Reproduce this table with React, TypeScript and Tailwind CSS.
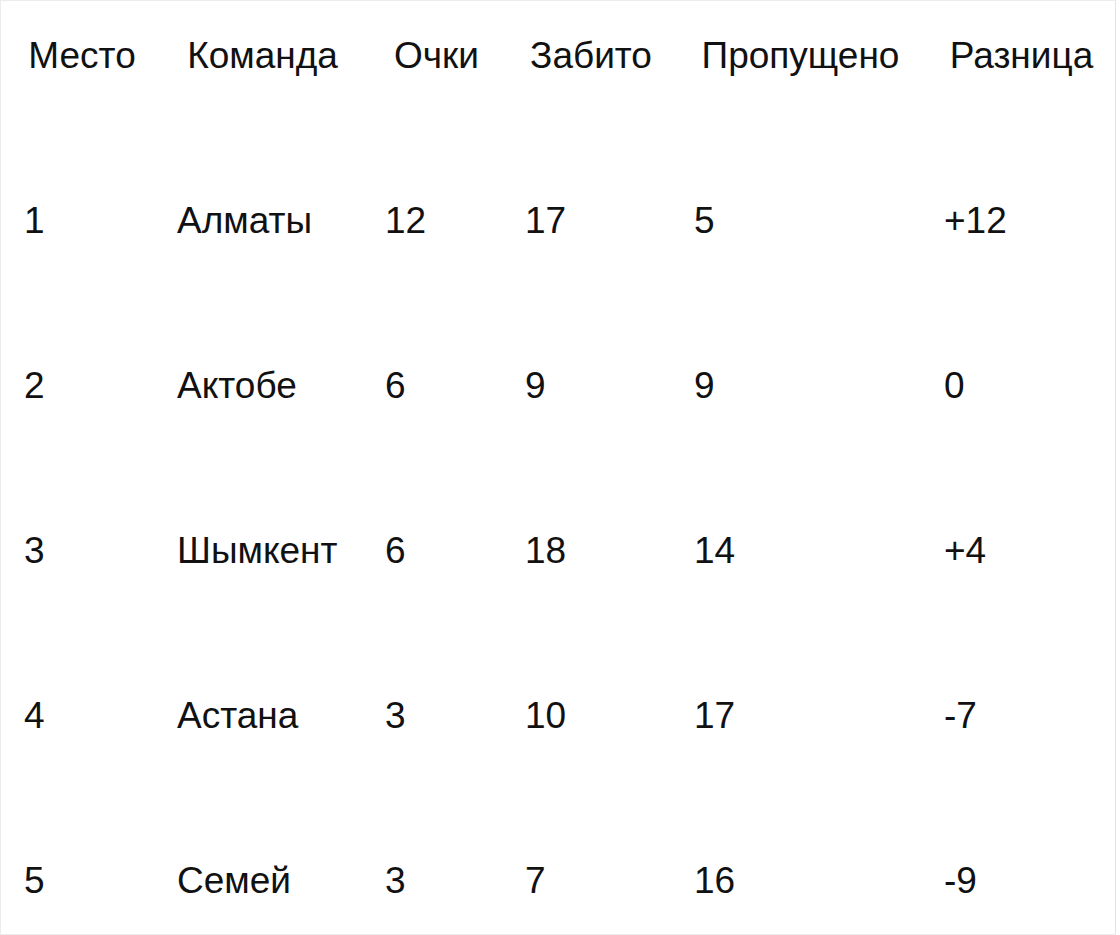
const columns = ['Место', 'Команда', 'Очки', 'Забито', 'Пропущено', 'Разница'];

const rows = [
  ['1', 'Алматы', '12', '17', '5', '+12'],
  ['2', 'Актобе', '6', '9', '9', '0'],
  ['3', 'Шымкент', '6', '18', '14', '+4'],
  ['4', 'Астана', '3', '10', '17', '-7'],
  ['5', 'Семей', '3', '7', '16', '-9'],
];

const App = () => {
  return (
    <div className="w-[1120px] h-[935px] overflow-hidden bg-white text-[#111] font-['Liberation_Sans',Arial,sans-serif] text-[37px] leading-[42px]">
      <div className="h-full border border-[#ececec] border-r-[#e4e4e4] mr-[4px] pt-[34px] pl-[23px]">
        {/* Header */}
        <div className="grid grid-cols-[116px_171px_103px_132px_213px_155px] gap-x-[37px] h-[165px]">
          {columns.map((col) => (
            <div key={col} className="text-center whitespace-nowrap">
              {col}
            </div>
          ))}
        </div>

        {/* Rows */}
        {rows.map((row) => (
          <div
            key={row[0]}
            className="grid grid-cols-[116px_171px_103px_132px_213px_155px] gap-x-[37px] h-[165px] last:h-auto"
          >
            {row.map((cell, i) => (
              <div key={i} className="whitespace-nowrap">
                {cell}
              </div>
            ))}
          </div>
        ))}
      </div>
    </div>
  );
};

export default App;
